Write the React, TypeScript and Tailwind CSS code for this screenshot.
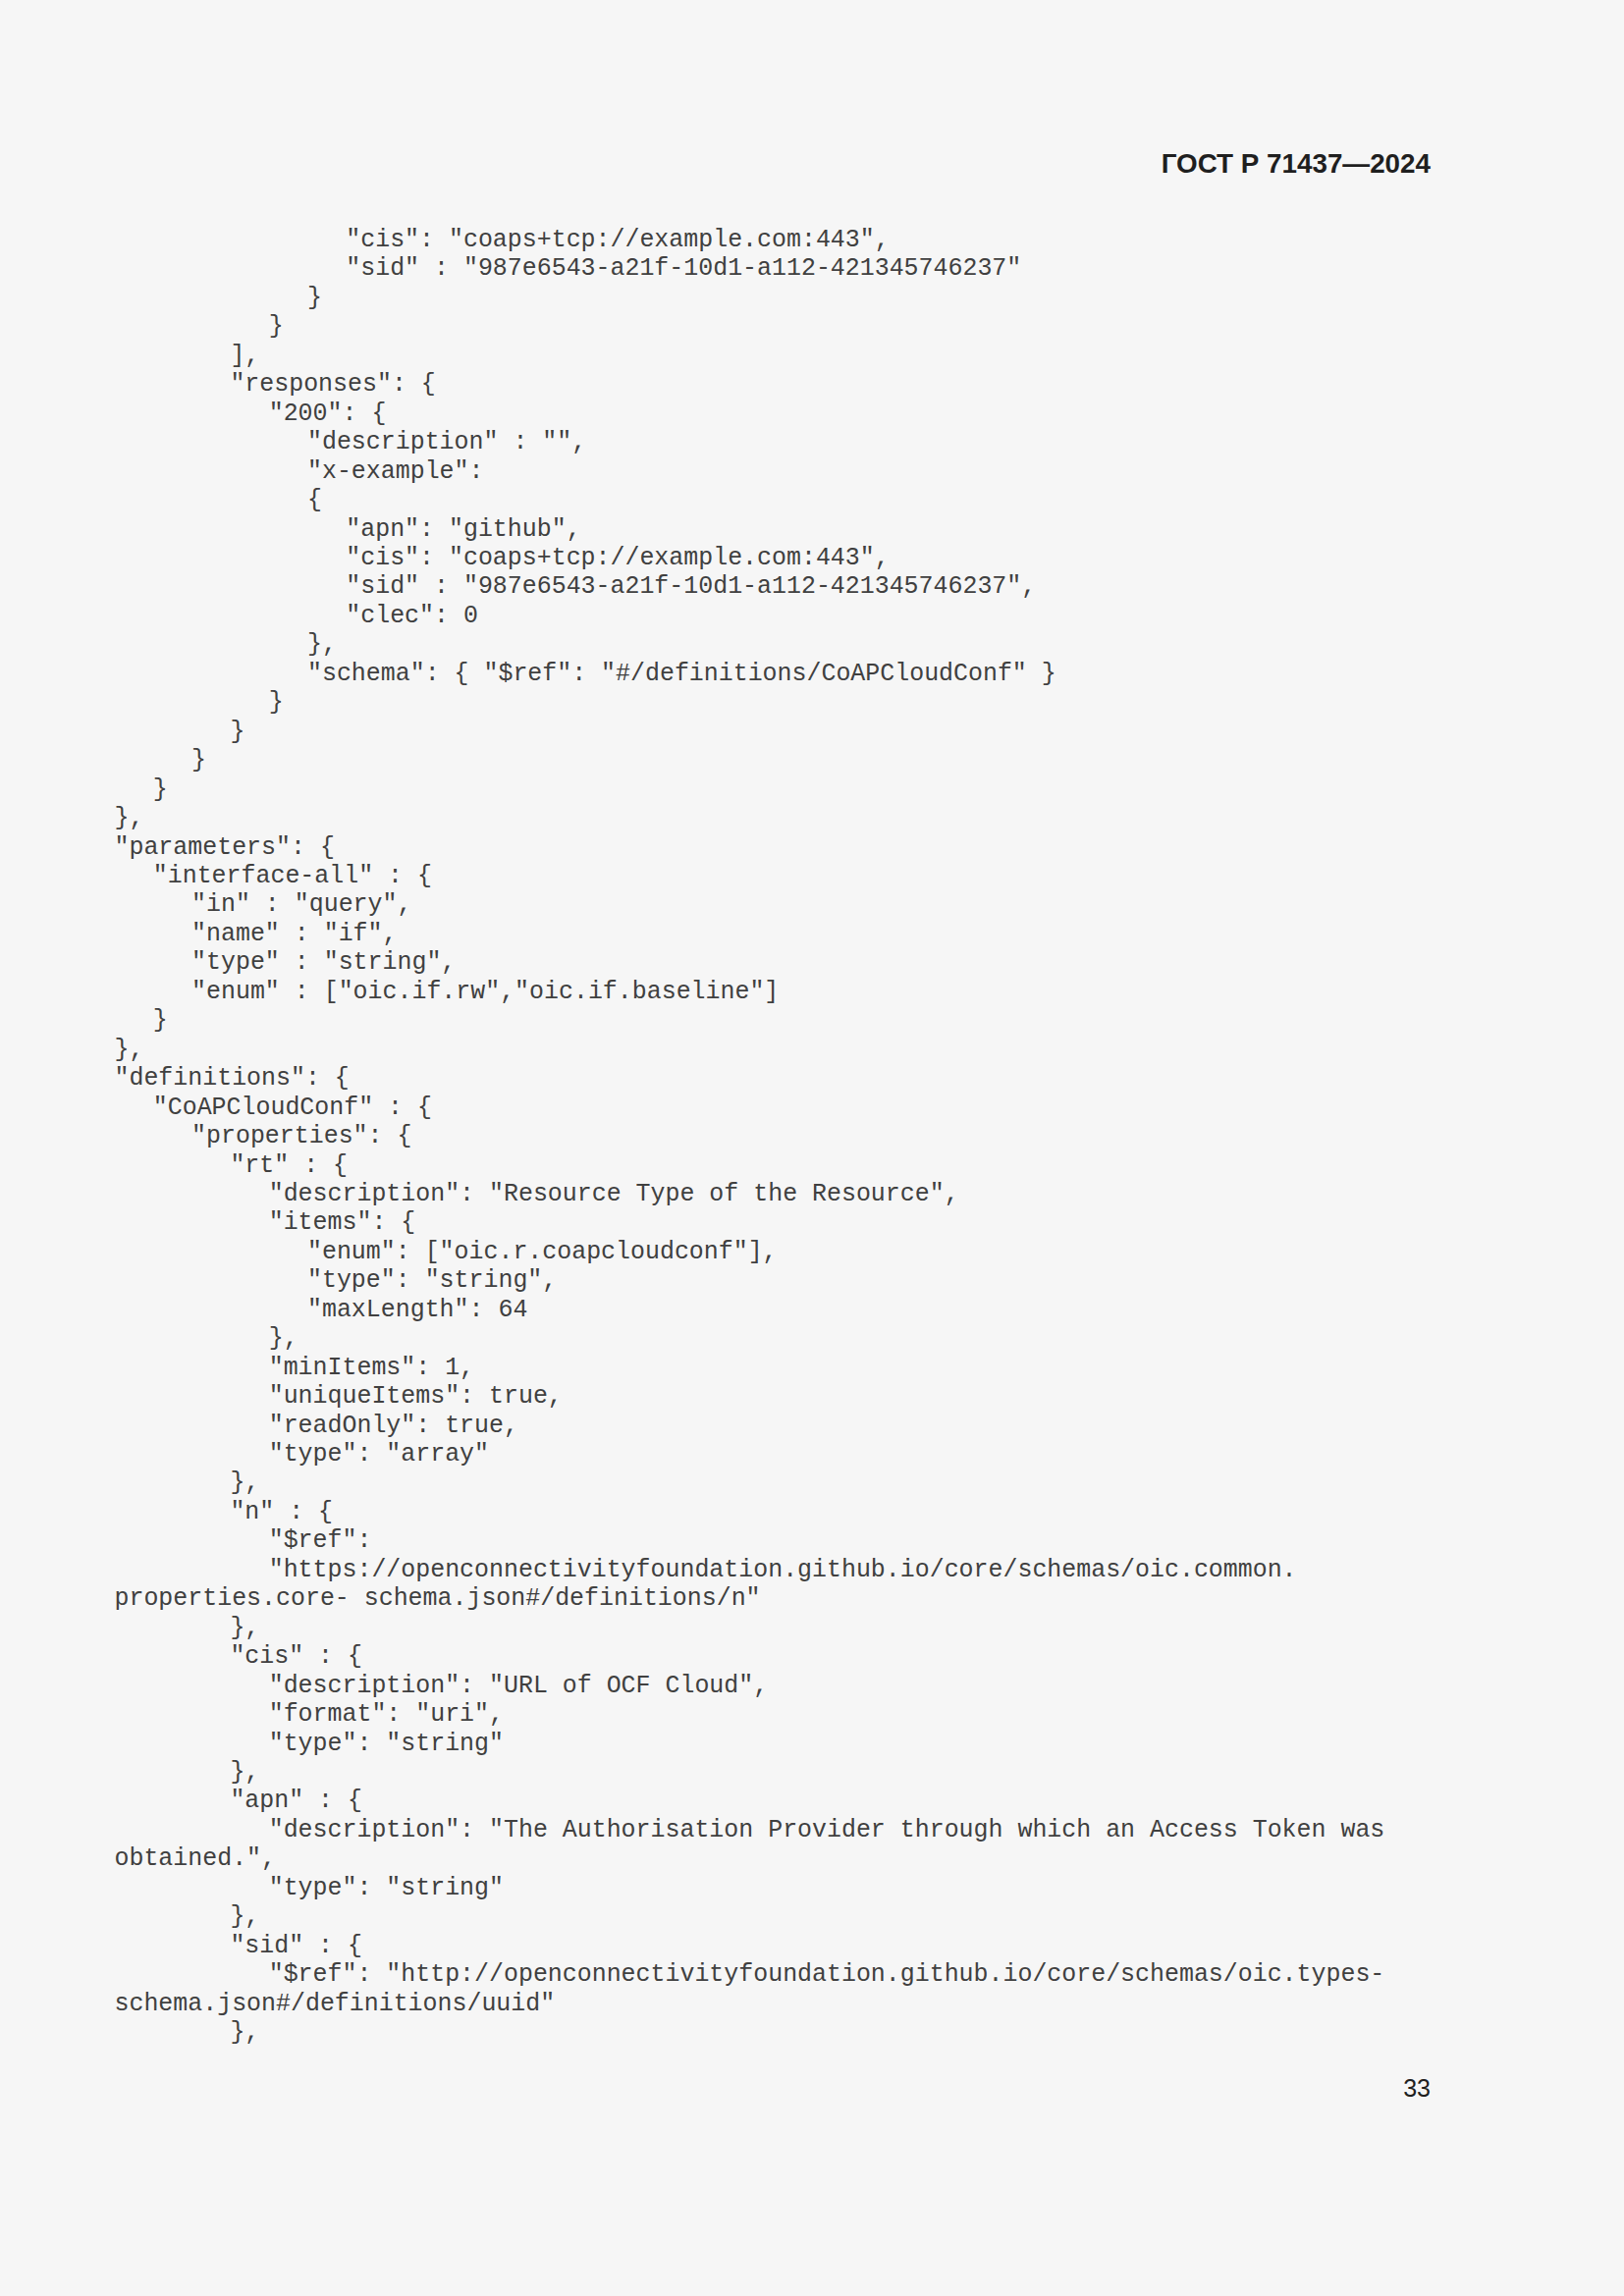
import React from "react";

const IND = [
  "pl-0",
  "pl-[39.3px]",
  "pl-[78.6px]",
  "pl-[117.9px]",
  "pl-[157.2px]",
  "pl-[196.5px]",
  "pl-[235.8px]",
];

const lines: [number, string][] = [
  [6, '"cis": "coaps+tcp://example.com:443",'],
  [6, '"sid" : "987e6543-a21f-10d1-a112-421345746237"'],
  [5, "}"],
  [4, "}"],
  [3, "],"],
  [3, '"responses": {'],
  [4, '"200": {'],
  [5, '"description" : "",'],
  [5, '"x-example":'],
  [5, "{"],
  [6, '"apn": "github",'],
  [6, '"cis": "coaps+tcp://example.com:443",'],
  [6, '"sid" : "987e6543-a21f-10d1-a112-421345746237",'],
  [6, '"clec": 0'],
  [5, "},"],
  [5, '"schema": { "$ref": "#/definitions/CoAPCloudConf" }'],
  [4, "}"],
  [3, "}"],
  [2, "}"],
  [1, "}"],
  [0, "},"],
  [0, '"parameters": {'],
  [1, '"interface-all" : {'],
  [2, '"in" : "query",'],
  [2, '"name" : "if",'],
  [2, '"type" : "string",'],
  [2, '"enum" : ["oic.if.rw","oic.if.baseline"]'],
  [1, "}"],
  [0, "},"],
  [0, '"definitions": {'],
  [1, '"CoAPCloudConf" : {'],
  [2, '"properties": {'],
  [3, '"rt" : {'],
  [4, '"description": "Resource Type of the Resource",'],
  [4, '"items": {'],
  [5, '"enum": ["oic.r.coapcloudconf"],'],
  [5, '"type": "string",'],
  [5, '"maxLength": 64'],
  [4, "},"],
  [4, '"minItems": 1,'],
  [4, '"uniqueItems": true,'],
  [4, '"readOnly": true,'],
  [4, '"type": "array"'],
  [3, "},"],
  [3, '"n" : {'],
  [4, '"$ref":'],
  [4, '"https://openconnectivityfoundation.github.io/core/schemas/oic.common.'],
  [0, 'properties.core- schema.json#/definitions/n"'],
  [3, "},"],
  [3, '"cis" : {'],
  [4, '"description": "URL of OCF Cloud",'],
  [4, '"format": "uri",'],
  [4, '"type": "string"'],
  [3, "},"],
  [3, '"apn" : {'],
  [4, '"description": "The Authorisation Provider through which an Access Token was'],
  [0, 'obtained.",'],
  [4, '"type": "string"'],
  [3, "},"],
  [3, '"sid" : {'],
  [4, '"$ref": "http://openconnectivityfoundation.github.io/core/schemas/oic.types-'],
  [0, 'schema.json#/definitions/uuid"'],
  [3, "},"],
];

export default function App() {
  return (
    <div className="min-h-[2339px] w-[1654px] bg-[#f6f6f6] pt-[151px]">
      <div className="flex justify-end pr-[197px]">
        <div
          className="text-[27.8px] leading-[32px] font-bold text-[#1f1f1f]"
          style={{ fontFamily: '"Liberation Sans", Arial, sans-serif' }}
        >
          ГОСТ Р 71437—2024
        </div>
      </div>
      <div
        className="mt-[47px] pl-[116.5px] text-[24.93px] leading-[29.45px] text-[#404040]"
        style={{ fontFamily: '"Liberation Mono", "Courier New", monospace' }}
      >
        {lines.map(([lvl, t], i) => (
          <div key={i} className={"whitespace-pre " + IND[lvl]}>
            {t}
          </div>
        ))}
      </div>
      <div className="mt-[27.6px] flex justify-end pr-[197px]">
        <div
          className="text-[25px] leading-[28px] text-[#1f1f1f]"
          style={{ fontFamily: '"Liberation Sans", Arial, sans-serif' }}
        >
          33
        </div>
      </div>
    </div>
  );
}
